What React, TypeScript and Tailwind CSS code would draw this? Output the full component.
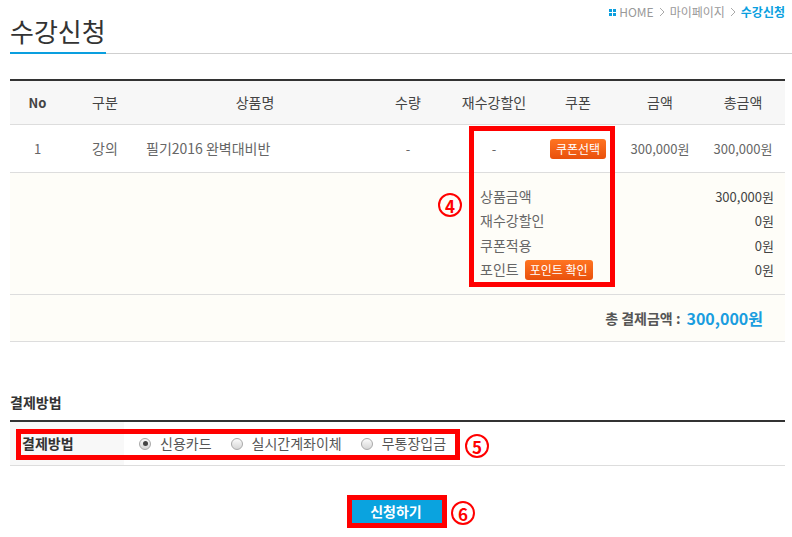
import React from 'react';

const cols = 'grid grid-cols-[55px_80px_220px_86px_86px_82px_82px_84px]';

function Radio({ checked }: { checked?: boolean }) {
  return (
    <span className="flex h-[12px] w-[12px] items-center justify-center rounded-full border border-[#a9a9a9] bg-gradient-to-b from-[#fbfbfb] to-[#d6d6d6]">
      {checked && <span className="h-[5px] w-[5px] rounded-full bg-[#444]" />}
    </span>
  );
}

function Chevron() {
  return (
    <svg width="6" height="10" viewBox="0 0 6 10" className="mx-[5px]">
      <path d="M1 1 L5 5 L1 9" fill="none" stroke="#aaa" strokeWidth="1" />
    </svg>
  );
}

function Marker({ n, className }: { n: number; className: string }) {
  return (
    <div
      className={`absolute flex h-[24px] w-[24px] items-center justify-center rounded-full border-2 border-[#ff0000] text-[17px] leading-none font-bold text-[#ff0000] ${className}`}
    >
      {n}
    </div>
  );
}

export default function App() {
  const summary = [
    { label: '상품금액', value: '300,000원' },
    { label: '재수강할인', value: '0원' },
    { label: '쿠폰적용', value: '0원' },
    { label: '포인트', value: '0원', button: true },
  ];

  return (
    <div className="relative h-[537px] w-[792px] overflow-hidden bg-white font-['Noto_Sans_CJK_KR','Noto_Sans',sans-serif] text-[13px] text-[#666]">
      {/* title */}
      <div className="ml-[10px] flex justify-between border-b border-[#cfcfcf]">
        <h1 className="-mb-px border-b-2 border-[#0a9fdf] pt-[13px] pb-[4px] text-[26px] leading-[35px] text-[#333]">
          수강신청
        </h1>
        <div className="mt-[5px] mr-[7px] flex h-[14px] items-center text-[12px] text-[#999]">
          <span className="mr-[3px] grid grid-cols-2 gap-[1px]">
            <span className="h-[3px] w-[3px] bg-[#0a9fdf]" />
            <span className="h-[3px] w-[3px] bg-[#0a9fdf]" />
            <span className="h-[3px] w-[3px] bg-[#0a9fdf]" />
            <span className="h-[3px] w-[3px] bg-[#0a9fdf]" />
          </span>
          HOME
          <Chevron />
          마이페이지
          <Chevron />
          <span className="font-bold text-[#0a9fdf]">수강신청</span>
        </div>
      </div>

      {/* order table */}
      <div className="mt-[25px] mr-[7px] ml-[10px] border-t-2 border-[#333]">
        <div className={`${cols} h-[44px] items-center border-b border-[#ddd] bg-[#f7f7f7] text-center text-[14px] text-[#444]`}>
          <span className="text-[13px] font-bold">No</span>
          <span>구분</span>
          <span>상품명</span>
          <span>수량</span>
          <span>재수강할인</span>
          <span>쿠폰</span>
          <span>금액</span>
          <span>총금액</span>
        </div>
        <div className={`${cols} h-[48px] items-center border-b border-[#ddd] text-center`}>
          <span>1</span>
          <span className="text-[14px]">강의</span>
          <span className="pl-[1px] text-left text-[14px]">필기2016 완벽대비반</span>
          <span>-</span>
          <span>-</span>
          <span className="flex justify-center">
            <button className="h-[20px] rounded-[3px] bg-gradient-to-b from-[#ff7421] to-[#e9500b] px-[6px] text-[12px] leading-[20px] text-white">
              쿠폰선택
            </button>
          </span>
          <span>300,000원</span>
          <span>300,000원</span>
        </div>
        <div className="flex h-[122px] flex-col border-b border-[#ddd] bg-[#fefdf8] pt-[11px] pr-[11px] pl-[470px]">
          {summary.map((row) => (
            <div key={row.label} className="flex h-[24.5px] items-center justify-between">
              <span className="flex items-center text-[14px]">
                {row.label}
                {row.button && (
                  <button className="ml-[6px] h-[20px] rounded-[3px] bg-gradient-to-b from-[#ff7421] to-[#e9500b] px-[5px] text-[12px] leading-[20px] text-white">
                    포인트 확인
                  </button>
                )}
              </span>
              <span className="text-[#444]">{row.value}</span>
            </div>
          ))}
        </div>
        <div className="flex h-[47px] items-center justify-end border-b border-[#ddd] bg-[#fefdf8] pr-[22px]">
          <span className="text-[14px] font-bold text-[#555]">총 결제금액 :</span>
          <span className="ml-[6px] text-[16px] font-bold text-[#1a9ddf]">300,000원</span>
        </div>
      </div>

      {/* payment */}
      <h2 className="mt-[50px] mb-[8px] ml-[10px] text-[14px] leading-[20px] font-bold text-[#333]">결제방법</h2>
      <div className="mr-[7px] ml-[10px] flex h-[46px] border-t-2 border-b border-[#333] border-b-[#ddd]">
        <div className="flex w-[114px] items-center bg-[#f8f8f8] pl-[12px] text-[14px] font-bold text-[#333]">
          결제방법
        </div>
        <div className="flex items-center pl-[15px] text-[14px] text-[#555]">
          <Radio checked />
          <span className="mr-[19px] ml-[9px]">신용카드</span>
          <Radio />
          <span className="mr-[19px] ml-[9px]">실시간계좌이체</span>
          <Radio />
          <span className="ml-[9px]">무통장입금</span>
        </div>
      </div>

      <div className="mt-[33px] flex justify-center">
        <button className="h-[25px] w-[91px] bg-[#0aa3df] text-[14px] font-bold text-white">신청하기</button>
      </div>

      {/* annotations */}
      <div className="absolute top-[126px] left-[469px] h-[161px] w-[146px] border-[5px] border-[#ff0000]" />
      <Marker n={4} className="top-[193px] left-[438px]" />
      <div className="absolute top-[429px] left-[16px] h-[31px] w-[444px] border-[5px] border-[#ff0000]" />
      <Marker n={5} className="top-[434px] left-[465px]" />
      <div className="absolute top-[495px] left-[347px] h-[33px] w-[100px] border-[5px] border-[#ff0000]" />
      <Marker n={6} className="top-[501px] left-[451px]" />
    </div>
  );
}
